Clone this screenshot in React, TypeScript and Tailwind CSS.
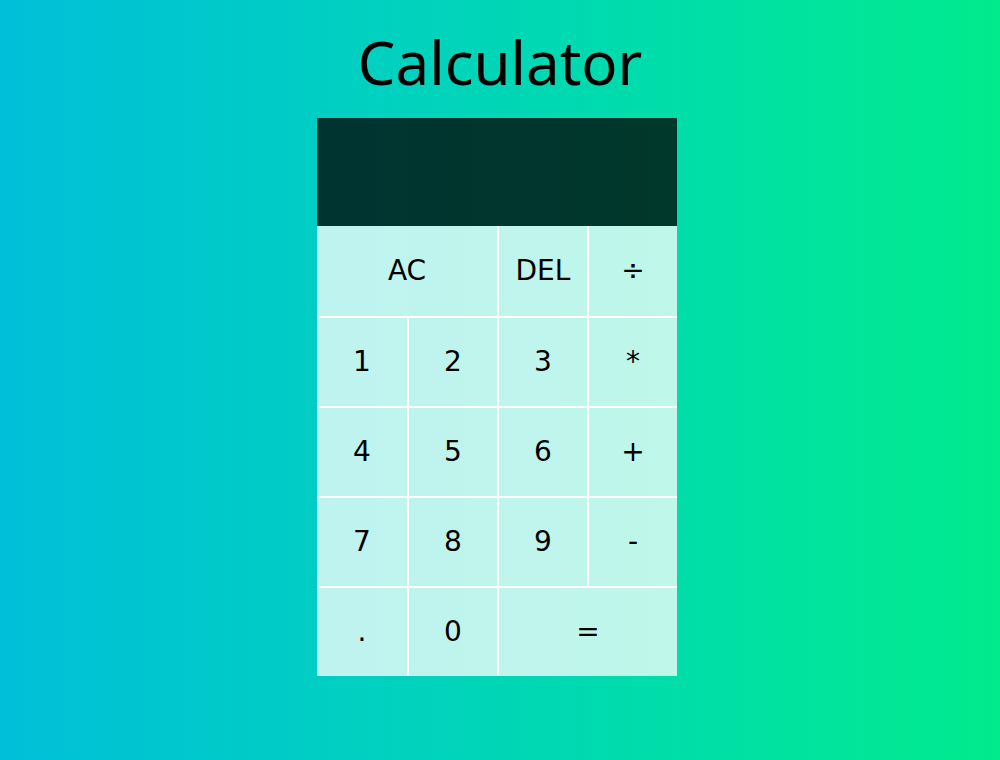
const keys: { label: string; cls: string }[] = [
  { label: "AC", cls: "col-span-2" },
  { label: "DEL", cls: "border-l-2" },
  { label: "÷", cls: "border-l-2" },
  { label: "1", cls: "border-t-2" },
  { label: "2", cls: "border-t-2 border-l-2" },
  { label: "3", cls: "border-t-2 border-l-2" },
  { label: "*", cls: "border-t-2 border-l-2" },
  { label: "4", cls: "border-t-2" },
  { label: "5", cls: "border-t-2 border-l-2" },
  { label: "6", cls: "border-t-2 border-l-2" },
  { label: "+", cls: "border-t-2 border-l-2" },
  { label: "7", cls: "border-t-2" },
  { label: "8", cls: "border-t-2 border-l-2" },
  { label: "9", cls: "border-t-2 border-l-2" },
  { label: "-", cls: "border-t-2 border-l-2" },
  { label: ".", cls: "border-t-2" },
  { label: "0", cls: "border-t-2 border-l-2" },
  { label: "=", cls: "col-span-2 border-t-2 border-l-2" },
];

export default function App() {
  return (
    <main className="flex min-h-screen flex-col items-center bg-gradient-to-r from-[#00bfd9] to-[#00eb8c]">
      <h1 className="mt-[24px] mb-[18px] text-[60px] leading-[76px] text-black font-['Noto_Sans',sans-serif]">
        Calculator
      </h1>

      <div className="mr-[6px] w-[360px]">
        <div className="h-[108px] bg-black/75" />

        <div className="grid grid-cols-4 auto-rows-[90px]">
          {keys.map((key) => (
            <button
              key={key.label}
              className={`flex items-center justify-center border-white bg-white/75 text-[28px] text-black font-['DejaVu_Sans',sans-serif] ${key.cls}`}
            >
              {key.label}
            </button>
          ))}
        </div>
      </div>
    </main>
  );
}
